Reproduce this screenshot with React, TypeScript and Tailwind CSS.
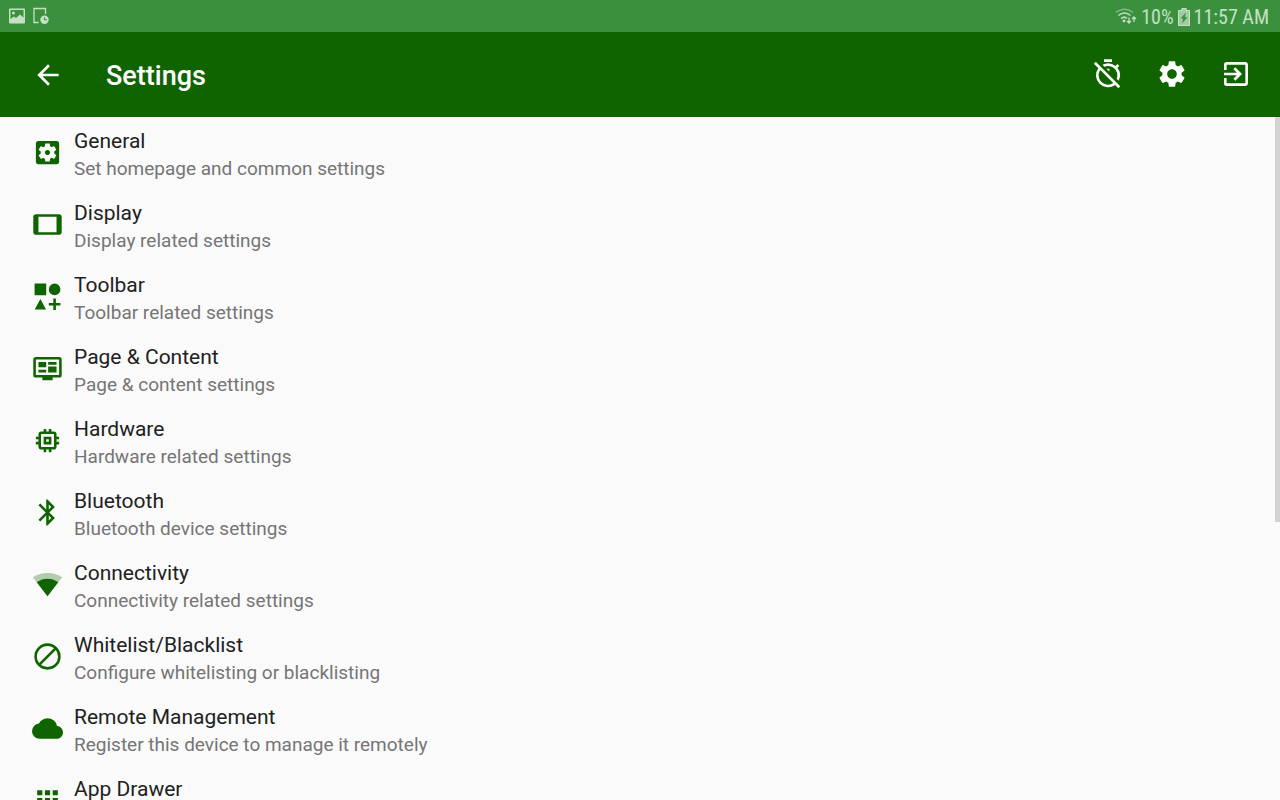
import type { ReactNode } from "react";
import {
  MdApps,
  MdArrowBack,
  MdBluetooth,
  MdCloud,
  MdExitToApp,
  MdMemory,
  MdOutlineTimerOff,
  MdSettings,
  MdSettingsApplications,
  MdTablet,
} from "react-icons/md";

function ShapesIcon() {
  return (
    <svg viewBox="0 0 24 24" className="size-[31px]" fill="currentColor" aria-hidden="true">
      <path d="M2 2h9v9H2zM17.5 2a4.5 4.5 0 1 1 0 9 4.5 4.5 0 0 1 0-9zM6.5 14l4.400 8H2.100zM16.5 13.500h2v3.500h3.500v2h-3.500v3.500h-2V19H13v-2h3.500z" />
    </svg>
  );
}

function MonitorIcon() {
  return (
    <svg viewBox="0 0 24 24" className="size-[31px]" fill="currentColor" aria-hidden="true">
      <path d="M21 3H3a2 2 0 0 0-2 2v12a2 2 0 0 0 2 2h5v2h8v-2h5a2 2 0 0 0 2-2V5a2 2 0 0 0-2-2zm0 14H3V5h18v12zM5 7h6v4H5zM12.500 7H19v2h-6.500zM12.500 10.500H19V15h-6.500zM5 13h6v2H5z" />
    </svg>
  );
}

function SignalIcon() {
  return (
    <svg viewBox="0 0 24 24" className="size-[31px]" fill="currentColor" aria-hidden="true">
      <path fillOpacity=".3" d="M12 3C6.950 3 3.150 4.850.600 6.300L12 21 23.400 6.300C20.850 4.850 17.050 3 12 3z" />
      <path d="M3.700 10.200 12 21l8.300-10.800C18.200 9 15.500 7.600 12 7.600S5.800 9 3.700 10.200z" />
    </svg>
  );
}

function BlockIcon() {
  return (
    <svg viewBox="0 0 24 24" className="size-[31px]" fill="none" stroke="currentColor" strokeWidth="2" aria-hidden="true">
      <circle cx="12" cy="12" r="9.200" />
      <path d="M5.500 18.500 18.500 5.500" />
    </svg>
  );
}

const items: { title: string; summary: string; icon: ReactNode }[] = [
  { title: "General", summary: "Set homepage and common settings", icon: <MdSettingsApplications className="size-[31px]" /> },
  { title: "Display", summary: "Display related settings", icon: <MdTablet className="size-[31px]" /> },
  { title: "Toolbar", summary: "Toolbar related settings", icon: <ShapesIcon /> },
  { title: "Page & Content", summary: "Page & content settings", icon: <MonitorIcon /> },
  { title: "Hardware", summary: "Hardware related settings", icon: <MdMemory className="size-[31px]" /> },
  { title: "Bluetooth", summary: "Bluetooth device settings", icon: <MdBluetooth className="size-[31px]" /> },
  { title: "Connectivity", summary: "Connectivity related settings", icon: <SignalIcon /> },
  { title: "Whitelist/Blacklist", summary: "Configure whitelisting or blacklisting", icon: <BlockIcon /> },
  { title: "Remote Management", summary: "Register this device to manage it remotely", icon: <MdCloud className="size-[31px]" /> },
  { title: "App Drawer", summary: "App drawer settings", icon: <MdApps className="size-[31px]" /> },
];

function StatusBar() {
  return (
    <div className="flex h-8 shrink-0 items-center justify-between bg-[#3b903e] pr-[11px] pl-2 text-[#c4e0c5]">
      <div className="flex items-center gap-[7px]">
        <svg viewBox="0 0 18 16" className="h-4 w-[18px]" aria-hidden="true">
          <path fill="currentColor" fillRule="evenodd" d="M2 .500h14a1 1 0 0 1 1 1v13a1 1 0 0 1-1 1H2a1 1 0 0 1-1-1v-13a1 1 0 0 1 1-1zM2.500 2v9l3.500-2.500 2 1.500 4-3.500 3.500 3V2zM5.500 3.500a1.500 1.500 0 1 1 0 3 1.500 1.500 0 0 1 0-3z" />
        </svg>
        <svg viewBox="0 0 16 18" className="h-[18px] w-4" aria-hidden="true">
          <path fill="none" stroke="currentColor" strokeWidth="1.300" d="M5.500 15.500H1V1.500h11.500V7" />
          <path fill="currentColor" fillRule="evenodd" d="M11.500 8.500a4.200 4.200 0 1 1 0 8.400 4.200 4.200 0 0 1 0-8.400zM11 10.200v3h3v-1h-2v-2z" />
        </svg>
      </div>
      <div className="flex items-center gap-1 pt-[2px] font-['Roboto_Condensed',Roboto,sans-serif] text-[20px]">
        <svg viewBox="0 0 22 18" className="h-[18px] w-[22px]" fill="none" stroke="currentColor" strokeWidth="1.500" aria-hidden="true">
          <path strokeOpacity=".5" d="M1 4.500c5-4.500 12-4.500 17 0" />
          <path d="M3.500 7.500c3.500-3.300 8.500-3.300 12 0M6 10.500c2.200-1.800 4.200-1.800 6 0" />
          <circle cx="9" cy="13" r="1.400" fill="currentColor" stroke="none" />
          <path strokeWidth="1.300" d="M14 9.500V15m-2-2 2 2 2-2M19 14V9m-2 2 2-2 2 2" />
        </svg>
        <span>10%</span>
        <svg viewBox="0 0 12 18" className="h-[18px] w-3" aria-hidden="true">
          <path fill="currentColor" fillOpacity=".75" d="M3.500 0h5v2H12v16H0V2h3.500z" />
          <path fill="none" stroke="currentColor" d="M4 .500h4v2h3.500v15H.500v-15H4z" />
          <path className="fill-[#3b903e]" d="M8 4.500 2.500 10.500h2.700L4 15.500l5.500-6.300H6.800z" />
        </svg>
        <span>11:57 AM</span>
      </div>
    </div>
  );
}

export default function App() {
  return (
    <div className="flex h-screen flex-col overflow-hidden bg-[#fafafa] font-[Roboto,sans-serif]">
      <StatusBar />
      <header className="flex h-[85px] shrink-0 items-center bg-[#0f6400] px-7 text-white">
        <button type="button" aria-label="Back" className="flex size-10 items-center justify-center">
          <MdArrowBack className="size-8" />
        </button>
        <h1 className="ml-[38px] flex-1 pt-1 text-[27px] font-medium">Settings</h1>
        <div className="flex items-center gap-8 pb-[2px]">
          <button type="button" aria-label="Disable timer">
            <MdOutlineTimerOff className="size-8" />
          </button>
          <button type="button" aria-label="Preferences">
            <MdSettings className="size-8" />
          </button>
          <button type="button" aria-label="Exit">
            <MdExitToApp className="size-8" />
          </button>
        </div>
      </header>
      <main className="relative min-h-0 flex-1">
        <ul className="h-full overflow-y-auto [scrollbar-width:none]">
          {items.map((item) => (
            <li key={item.title}>
              <a href="#" className="flex h-[72px] items-center gap-[11px] px-8">
                <span className="pb-px text-[#0f6400]">{item.icon}</span>
                <span className="flex flex-col pt-1">
                  <span className="text-[21px] leading-7 text-[#212121]">{item.title}</span>
                  <span className="text-[19px] leading-7 text-[#757575]">{item.summary}</span>
                </span>
              </a>
            </li>
          ))}
        </ul>
        <div className="absolute top-0 right-0 h-[405px] w-[5px] bg-[#d3d3d3]" />
      </main>
    </div>
  );
}
